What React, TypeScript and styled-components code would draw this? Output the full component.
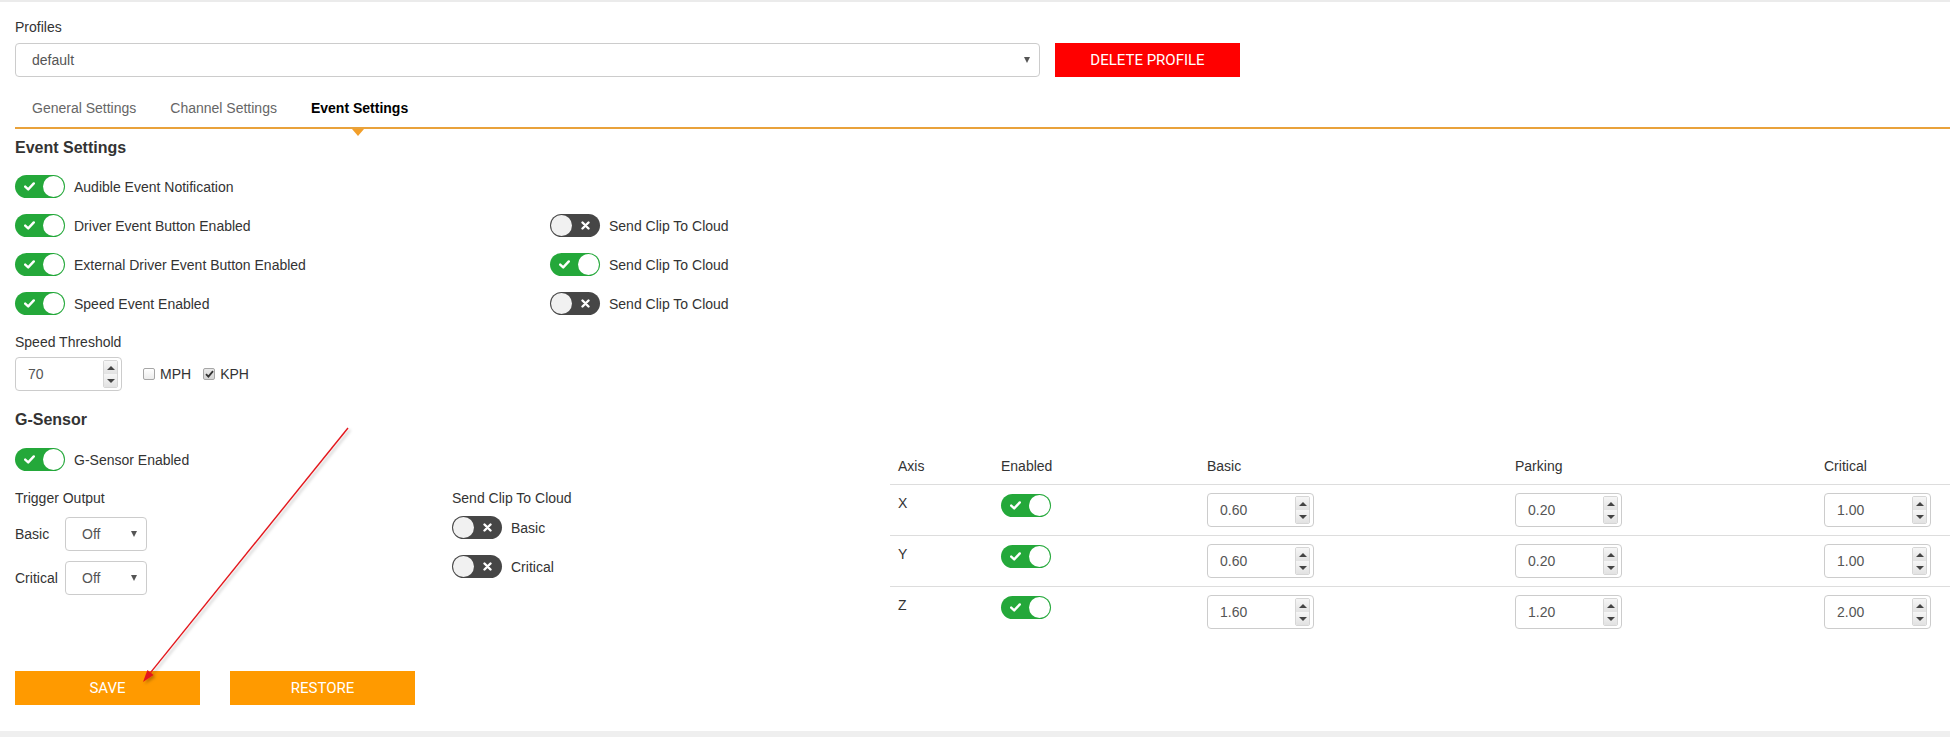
import React from 'react'
import styled, { createGlobalStyle, css } from 'styled-components'

const GlobalStyle = createGlobalStyle`
  html, body {
    margin: 0;
    padding: 0;
    background: #fff;
  }
  body {
    font-family: 'Liberation Sans', Arial, sans-serif;
    font-size: 14px;
    color: #333;
  }
  * {
    box-sizing: border-box;
  }
`

const ORANGE_LINE = '#e9a23b'
const GREEN = '#24a83a'

const Page = styled.div`
  position: relative;
  width: 1950px;
  height: 737px;
  border-top: 2px solid #ebebeb;
  border-bottom: 6px solid #efefef;
  padding: 15px 0 0 15px;
  overflow: hidden;
`

const FieldLabel = styled.div<{ $mt?: number }>`
  line-height: 20px;
  margin-top: ${({ $mt }) => $mt || 0}px;
`

const ProfileRow = styled.div`
  display: flex;
  align-items: center;
  gap: 15px;
  margin-top: 6px;
`

const SelectBox = styled.div<{ $w: number; $pad?: number }>`
  display: flex;
  align-items: center;
  justify-content: space-between;
  width: ${({ $w }) => $w}px;
  height: 34px;
  padding: 0 9px 0 ${({ $pad }) => $pad || 16}px;
  border: 1px solid #ccc;
  border-radius: 4px;
  color: #555;
  background: #fff;
`

const Caret = styled.span`
  width: 0;
  height: 0;
  border-left: 3.5px solid transparent;
  border-right: 3.5px solid transparent;
  border-top: 6px solid #555;
`

const FlatButton = styled.button<{ $color: string }>`
  width: 185px;
  height: 34px;
  border: 0;
  border-radius: 0;
  background: ${({ $color }) => $color};
  color: #fff;
  font-family: Roboto, 'Liberation Sans', Arial, sans-serif;
  font-size: 15px;
  font-weight: 400;
  text-transform: uppercase;
  padding: 0;
  cursor: pointer;
`

const TabBar = styled.nav`
  display: flex;
  margin-top: 11px;
  height: 41px;
  border-bottom: 2px solid ${ORANGE_LINE};
`

const Tab = styled.span<{ $active?: boolean }>`
  position: relative;
  padding: 0 17px;
  line-height: 40px;
  color: ${({ $active }) => ($active ? '#000' : '#666')};
  font-weight: ${({ $active }) => ($active ? 700 : 400)};

  ${({ $active }) =>
    $active &&
    css`
      &::after {
        content: '';
        position: absolute;
        left: 50%;
        bottom: -9px;
        margin-left: -8px;
        border-left: 6px solid transparent;
        border-right: 6px solid transparent;
        border-top: 7px solid #f29f2a;
      }
    `}
`

const SectionTitle = styled.h3<{ $mt: number }>`
  margin: ${({ $mt }) => $mt}px 0 0;
  font-size: 16px;
  line-height: 20px;
  font-weight: 700;
  color: #333;
`

const EventGrid = styled.div`
  display: grid;
  grid-template-columns: 535px 1fr;
  grid-auto-rows: 39px;
  margin-top: 9px;
`

const SwitchRow = styled.div<{ $gap?: number }>`
  display: flex;
  align-items: center;
  gap: ${({ $gap }) => $gap || 9}px;
`

const Track = styled.span<{ $on: boolean }>`
  display: flex;
  flex-direction: ${({ $on }) => ($on ? 'row' : 'row-reverse')};
  align-items: center;
  width: 50px;
  height: 23px;
  padding: 1px;
  border-radius: 12px;
  background: ${({ $on }) => ($on ? GREEN : '#464646')};
  flex-shrink: 0;
`

const TrackIcon = styled.span`
  flex: 1;
  display: flex;
  align-items: center;
  justify-content: center;
`

const Knob = styled.span<{ $on: boolean }>`
  width: 21px;
  height: 21px;
  border-radius: 50%;
  background: ${({ $on }) => ($on ? '#fff' : '#f1f1f1')};
`

const Toggle = ({ on }: { on: boolean }) => (
  <Track $on={on}>
    <TrackIcon>
      {on ? (
        <svg width="11" height="9" viewBox="0 0 11 9">
          <path d="M1.2 4.6 L4.2 7.4 L9.8 1.4" fill="none" stroke="#fff" strokeWidth="2.4" strokeLinecap="round" strokeLinejoin="round" />
        </svg>
      ) : (
        <svg width="9" height="9" viewBox="0 0 9 9">
          <path d="M1.5 1.5 L7.5 7.5 M7.5 1.5 L1.5 7.5" fill="none" stroke="#fff" strokeWidth="2.4" strokeLinecap="round" />
        </svg>
      )}
    </TrackIcon>
    <Knob $on={on} />
  </Track>
)

const Switch = ({ on, label, gap }: { on: boolean; label: string; gap?: number }) => (
  <SwitchRow $gap={gap}>
    <Toggle on={on} />
    <span>{label}</span>
  </SwitchRow>
)

const ThresholdRow = styled.div`
  display: flex;
  align-items: center;
  margin-top: 5px;
`

const NumberBox = styled.div<{ $w: number }>`
  display: flex;
  align-items: center;
  width: ${({ $w }) => $w}px;
  height: 34px;
  padding: 0 3px 0 12px;
  border: 1px solid #ccc;
  border-radius: 4px;
  color: #555;
  background: #fff;
`

const NumberValue = styled.span`
  flex: 1;
`

const Spinner = styled.span`
  display: flex;
  flex-direction: column;
  width: 15px;
  height: 28px;
  border: 1px solid #d6d6d6;
  border-radius: 2px;
  overflow: hidden;
`

const SpinHalf = styled.span<{ $up?: boolean }>`
  flex: 1;
  display: flex;
  align-items: center;
  justify-content: center;
  background: linear-gradient(#f6f6f6, #e2e2e2);

  &::before {
    content: '';
    width: 0;
    height: 0;
    border-left: 4px solid transparent;
    border-right: 4px solid transparent;
    ${({ $up }) => ($up ? 'border-bottom: 4px solid #444;' : 'border-top: 4px solid #444;')}
  }
`

const NumberField = ({ value, width = 107 }: { value: string; width?: number }) => (
  <NumberBox $w={width}>
    <NumberValue>{value}</NumberValue>
    <Spinner>
      <SpinHalf $up />
      <SpinHalf />
    </Spinner>
  </NumberBox>
)

const CheckLabel = styled.label<{ $ml: number }>`
  display: flex;
  align-items: center;
  gap: 5px;
  margin-left: ${({ $ml }) => $ml}px;
`

const Box = styled.span<{ $checked?: boolean }>`
  display: flex;
  align-items: center;
  justify-content: center;
  width: 12px;
  height: 12px;
  border: 1px solid #a6a6a6;
  border-radius: 2px;
  background: ${({ $checked }) => ($checked ? 'linear-gradient(#e9e9e9, #d4d4d4)' : 'linear-gradient(#fff, #ececec)')};
`

const CheckBox = ({ checked, label, ml }: { checked?: boolean; label: string; ml: number }) => (
  <CheckLabel $ml={ml}>
    <Box $checked={checked}>
      {checked && (
        <svg width="9" height="8" viewBox="0 0 9 8">
          <path d="M1 4.2 L3.4 6.6 L8 1.2" fill="none" stroke="#333" strokeWidth="1.8" />
        </svg>
      )}
    </Box>
    <span>{label}</span>
  </CheckLabel>
)

const SensorGrid = styled.div`
  display: grid;
  grid-template-columns: 437px 438px 1fr;
  grid-template-rows: 23px auto;
  row-gap: 16px;
  margin-top: 18px;
`

const TableCell = styled.div`
  grid-column: 3;
  grid-row: 1 / 3;
`

const Column = styled.div`
  display: flex;
  flex-direction: column;
  padding-top: 1px;
`

const TriggerGrid = styled.div`
  display: grid;
  grid-template-columns: 50px 82px;
  grid-auto-rows: 33px;
  row-gap: 11px;
  align-items: center;
  margin-top: 9px;
`

const CloudList = styled.div`
  display: grid;
  grid-auto-rows: 23px;
  row-gap: 16px;
  margin-top: 8px;
`

const AxisTable = styled.table`
  width: 100%;
  border-collapse: collapse;
  table-layout: fixed;
`

const Th = styled.th<{ $w?: number }>`
  width: ${({ $w }) => ($w ? `${$w}px` : 'auto')};
  padding: 8px;
  line-height: 20px;
  text-align: left;
  font-weight: 400;
  border-bottom: 1px solid #ddd;
`

const Td = styled.td`
  padding: 8px;
  line-height: 20px;
  vertical-align: top;
  border-top: 1px solid #ddd;
`

const ToggleCell = styled.div`
  padding-top: 1px;
`

const ButtonRow = styled.div`
  display: flex;
  gap: 30px;
  margin-top: 34px;
`

const Annotation = styled.svg`
  position: absolute;
  top: -2px;
  left: 0;
  pointer-events: none;
`

const axes = [
  { axis: 'X', basic: '0.60', parking: '0.20', critical: '1.00' },
  { axis: 'Y', basic: '0.60', parking: '0.20', critical: '1.00' },
  { axis: 'Z', basic: '1.60', parking: '1.20', critical: '2.00' },
]

const App = () => {
  return (
    <>
      <GlobalStyle />
      <Page>
        <FieldLabel>Profiles</FieldLabel>
        <ProfileRow>
          <SelectBox $w={1025}>
            <span>default</span>
            <Caret />
          </SelectBox>
          <FlatButton $color="#ff0000">Delete Profile</FlatButton>
        </ProfileRow>

        <TabBar>
          <Tab>General Settings</Tab>
          <Tab>Channel Settings</Tab>
          <Tab $active>Event Settings</Tab>
        </TabBar>

        <SectionTitle $mt={9}>Event Settings</SectionTitle>
        <EventGrid>
          <Switch on label="Audible Event Notification" />
          <div />
          <Switch on label="Driver Event Button Enabled" />
          <Switch on={false} label="Send Clip To Cloud" />
          <Switch on label="External Driver Event Button Enabled" />
          <Switch on label="Send Clip To Cloud" />
          <Switch on label="Speed Event Enabled" />
          <Switch on={false} label="Send Clip To Cloud" />
        </EventGrid>

        <FieldLabel $mt={9}>Speed Threshold</FieldLabel>
        <ThresholdRow>
          <NumberField value="70" />
          <CheckBox label="MPH" ml={21} />
          <CheckBox checked label="KPH" ml={12} />
        </ThresholdRow>

        <SectionTitle $mt={19}>G-Sensor</SectionTitle>
        <SensorGrid>
          <Switch on label="G-Sensor Enabled" />
          <div />
          <TableCell>
            <AxisTable>
              <thead>
                <tr>
                  <Th $w={103}>Axis</Th>
                  <Th $w={206}>Enabled</Th>
                  <Th $w={308}>Basic</Th>
                  <Th $w={309}>Parking</Th>
                  <Th>Critical</Th>
                </tr>
              </thead>
              <tbody>
                {axes.map(row => (
                  <tr key={row.axis}>
                    <Td>{row.axis}</Td>
                    <Td>
                      <ToggleCell>
                        <Toggle on />
                      </ToggleCell>
                    </Td>
                    <Td>
                      <NumberField value={row.basic} />
                    </Td>
                    <Td>
                      <NumberField value={row.parking} />
                    </Td>
                    <Td>
                      <NumberField value={row.critical} />
                    </Td>
                  </tr>
                ))}
              </tbody>
            </AxisTable>
          </TableCell>

          <Column>
            <FieldLabel>Trigger Output</FieldLabel>
            <TriggerGrid>
              <span>Basic</span>
              <SelectBox $w={82}>
                <span>Off</span>
                <Caret />
              </SelectBox>
              <span>Critical</span>
              <SelectBox $w={82}>
                <span>Off</span>
                <Caret />
              </SelectBox>
            </TriggerGrid>
          </Column>
          <Column>
            <FieldLabel>Send Clip To Cloud</FieldLabel>
            <CloudList>
              <Switch on={false} label="Basic" />
              <Switch on={false} label="Critical" />
            </CloudList>
          </Column>
        </SensorGrid>

        <ButtonRow>
          <FlatButton $color="#ff9a00">Save</FlatButton>
          <FlatButton $color="#ff9a00">Restore</FlatButton>
        </ButtonRow>

        <Annotation width="1950" height="737" viewBox="0 0 1950 737">
          <defs>
            <filter id="arrowShadow" x="-10%" y="-10%" width="130%" height="130%">
              <feDropShadow dx="2" dy="2" stdDeviation="1.5" floodColor="#000" floodOpacity="0.25" />
            </filter>
          </defs>
          <g filter="url(#arrowShadow)">
            <line x1="348" y1="428" x2="150.5" y2="672.6" stroke="#e3161b" strokeWidth="1.4" />
            <polygon points="143,682 153.6,675.1 147.4,670.1" fill="#e3161b" />
          </g>
        </Annotation>
      </Page>
    </>
  )
}

export default App
